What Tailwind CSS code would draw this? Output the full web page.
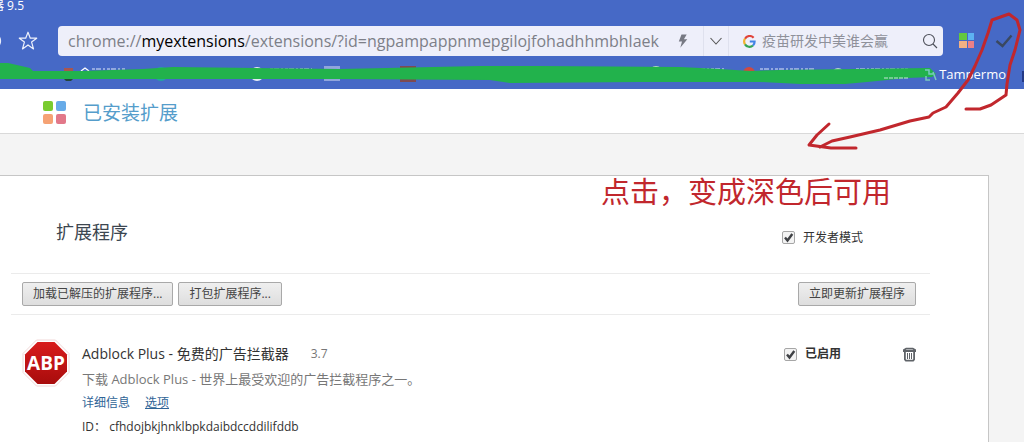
<!DOCTYPE html>
<html lang="zh-CN">

<head>
    <meta charset="UTF-8" />
    <title>已安装扩展</title>
    <meta name="viewport" content="width=device-width, initial-scale=1.0" />
    <script src="https://cdn.jsdelivr.net/npm/@tailwindcss/browser@4"></script>
</head>

<body class="relative min-h-screen flex flex-col overflow-hidden bg-[#f4f4f4] text-[#333] font-['Open_Sans','Noto_Sans_CJK_SC',sans-serif]">

    <!-- Browser chrome -->
    <header class="bg-[#4669c6] text-white">
        <div class="h-[26px] flex">
            <span class="text-xs leading-3 -ml-2">器 9.5</span>
        </div>

        <div class="h-[30px] flex items-center">
            <button class="w-[18px] -ml-[16px] shrink-0" aria-label="刷新">
                <svg class="w-[18px] h-[18px]" viewBox="0 0 18 18" fill="none" stroke="#e8ecfa" stroke-width="1.3">
                    <circle cx="9" cy="9" r="7.500" />
                </svg>
            </button>
            <button class="ml-4 shrink-0" aria-label="收藏">
                <svg class="w-5 h-5" viewBox="0 0 20 20" fill="none" stroke="#eef1fc" stroke-width="1.2" stroke-linejoin="round">
                    <path d="M10 1.200l2.300 6h6.400l-5.100 3.900 1.900 6.800-5.500-4-5.500 4 1.900-6.800L1.300 7.200h6.400z" />
                </svg>
            </button>

            <!-- Address and search -->
            <div class="ml-5 flex-1 min-w-0 h-[30px] flex items-center bg-[#eeeffa] rounded-[4px] text-[#7d7f88]">
                <div class="flex-1 min-w-0 pl-[10px] text-base leading-5 whitespace-nowrap">chrome://<span class="text-black">myextensions</span>/extensions/?id=ngpampappnmepgilojfohadhhmbhlaek</div>
                <button class="w-10 h-full shrink-0 flex items-center justify-center" aria-label="极速模式">
                    <svg class="w-3 h-4" viewBox="0 0 12 16" fill="#777983">
                        <path d="M4.500 1.500L1.800 8.600h3.200L3.300 14.800 10.300 6.300H6.900l2.800-4.800z" />
                    </svg>
                </button>
                <button class="w-[26px] h-full shrink-0 flex items-center justify-center border-x border-[#dfe1ee]" aria-label="历史">
                    <svg class="w-3 h-2" viewBox="0 0 12 8" fill="none" stroke="#555" stroke-width="1.1">
                        <path d="M.5 1l5.500 6L11.500 1" />
                    </svg>
                </button>
                <svg class="ml-[14px] w-[13px] h-[13px] shrink-0" viewBox="0 0 13 13" fill="none" stroke-width="2.2">
                    <path d="M10.600 2.800A5.300 5.300 0 0 0 2 3.700" stroke="#e0443a" />
                    <path d="M2 3.700a5.300 5.300 0 0 0 0 5.600" stroke="#efb32d" />
                    <path d="M2 9.300a5.300 5.300 0 0 0 8 1.200" stroke="#35a455" />
                    <path d="M10 10.500a5.300 5.300 0 0 0 1.600-4H6.800" stroke="#4183e6" />
                </svg>
                <input type="text" placeholder="疫苗研发中美谁会赢" aria-label="搜索" class="ml-[6px] w-[160px] text-sm placeholder:text-[#8f919a] outline-none" />
                <button class="w-4 mr-[5px] shrink-0" aria-label="搜索">
                    <svg class="w-4 h-4" viewBox="0 0 16 16" fill="none" stroke="#4c4e58" stroke-width="1.1">
                        <circle cx="7" cy="7" r="5.500" />
                        <path d="M11 11l4 4" />
                    </svg>
                </button>
            </div>

            <button class="ml-4 w-4 shrink-0" aria-label="扩展">
                <svg class="w-4 h-4" viewBox="0 0 16 16">
                    <path d="M0 0h8v7H0z" fill="#63c83f" />
                    <path d="M9 0h6v7H9z" fill="#5db2f2" />
                    <path d="M0 8h8v7H0z" fill="#f2b184" />
                    <path d="M9 8h6v7H9z" fill="#ec8087" />
                </svg>
            </button>
            <button class="ml-5 mr-[11px] w-[18px] shrink-0" aria-label="启用">
                <svg class="w-[18px] h-[14px]" viewBox="0 0 18 14" fill="none" stroke="#3a4860" stroke-width="2.4">
                    <path d="M1.500 7l6 5L16.500 1.500" />
                </svg>
            </button>
        </div>

        <!-- Bookmarks -->
        <nav class="h-[33px] flex items-center justify-end pr-[18px]">
            <a href="#" class="text-[13px] leading-4 mt-[2px]">Tampermo</a>
        </nav>
    </header>

    <div class="h-[45px] shrink-0 flex items-center pt-1 pl-[43px] bg-white border-b border-[#d9d9d9]">
        <svg class="w-6 h-6" viewBox="0 0 24 24">
            <rect x="0" y="0" width="10" height="10" rx="2" fill="#79cb2f" />
            <rect x="13" y="0" width="10" height="10" rx="2" fill="#67abe8" />
            <rect x="0" y="13" width="10" height="10" rx="2" fill="#f5a274" />
            <rect x="13" y="13" width="10" height="10" rx="2" fill="#e27889" />
        </svg>
        <h1 class="ml-4 text-[19px] leading-6 text-[#559dcb]">已安装扩展</h1>
    </div>

    <main class="mt-[41px] mr-[35px] flex-1 bg-white border-t border-r border-[#c6c6c6] pl-[11px] pr-[58px]">
        <div class="flex items-center justify-between h-[97px] pt-[14px] pl-[45px] pr-[67px]">
            <h2 class="text-lg leading-6 text-[#3c4650]">扩展程序</h2>
            <label class="flex items-center gap-2 mt-3 text-xs leading-4">
                <span class="grid">
                    <input type="checkbox" checked class="col-start-1 row-start-1 appearance-none w-[13px] h-[13px] bg-[#f3f3f3] border border-[#a6a6a6] rounded-[2px]" />
                    <svg class="col-start-1 row-start-1 w-[13px] h-[13px] pointer-events-none" viewBox="0 0 13 13" fill="none" stroke="#3f4145" stroke-width="2.4">
                        <path d="M3 6.500l2.500 3L10.300 3" />
                    </svg>
                </span>
                开发者模式
            </label>
        </div>

        <div class="flex items-center gap-[5px] h-[42px] border-y border-[#ebebeb] pl-[11px] pr-[14px]">
            <button class="h-6 px-[10px] text-xs leading-4 text-[#444] border border-[#a9a9a9] rounded-[2px] bg-linear-to-b from-[#efefef] to-[#dedede]">加载已解压的扩展程序...</button>
            <button class="h-6 px-[10px] text-xs leading-4 text-[#444] border border-[#a9a9a9] rounded-[2px] bg-linear-to-b from-[#efefef] to-[#dedede]">打包扩展程序...</button>
            <button class="ml-auto h-6 px-[10px] text-xs leading-4 text-[#444] border border-[#a9a9a9] rounded-[2px] bg-linear-to-b from-[#efefef] to-[#dedede]">立即更新扩展程序</button>
        </div>

        <!-- Extension -->
        <article class="flex items-start pt-6 pl-[11px] pr-[14px]">
            <svg class="w-12 h-12 shrink-0" viewBox="0 0 48 48">
                <defs>
                    <linearGradient id="abp" x1="0" y1="0" x2="0" y2="1">
                        <stop offset="0" stop-color="#d81c1c" />
                        <stop offset="1" stop-color="#a80c0c" />
                    </linearGradient>
                </defs>
                <path d="M14.500 1h19L47 14.500v19L33.500 47h-19L1 33.500v-19z" fill="#fff" stroke="#f0d8d8" />
                <path d="M15.500 3h17L45 15.500v17L32.500 45h-17L3 32.500v-17z" fill="url(#abp)" />
                <text x="24" y="31" text-anchor="middle" font-size="19" font-weight="700" fill="#fff" font-family="Open Sans, sans-serif">ABP</text>
            </svg>
            <div class="ml-3 flex-1 min-w-0">
                <div class="flex items-center gap-[22px] h-[30px] text-sm leading-5">
                    <h3>Adblock Plus - 免费的广告拦截器</h3>
                    <span class="text-xs text-[#777]">3.7</span>
                </div>
                <p class="text-[13px] leading-5 text-[#777]">下载 Adblock Plus - 世界上最受欢迎的广告拦截程序之一。</p>
                <div class="flex gap-[15px] mt-1 text-xs leading-5 text-[#2f6496]">
                    <a href="#">详细信息</a>
                    <a href="#" class="underline">选项</a>
                </div>
                <p class="mt-1 text-xs leading-5">ID： cfhdojbkjhnklbpkdaibdccddilifddb</p>
            </div>
            <div class="flex items-center h-[30px]">
                <label class="flex items-center gap-2 text-xs leading-4 font-bold">
                    <span class="grid">
                        <input type="checkbox" checked class="col-start-1 row-start-1 appearance-none w-[13px] h-[13px] bg-[#f3f3f3] border border-[#a6a6a6] rounded-[2px]" />
                        <svg class="col-start-1 row-start-1 w-[13px] h-[13px] pointer-events-none" viewBox="0 0 13 13" fill="none" stroke="#3f4145" stroke-width="2.4">
                            <path d="M3 6.500l2.500 3L10.300 3" />
                        </svg>
                    </span>
                    已启用
                </label>
                <button class="ml-[62px]" aria-label="删除">
                    <svg class="w-[13px] h-[15px]" viewBox="0 0 13 15" fill="none" stroke="#5f6368" stroke-width="1.8" stroke-linejoin="round">
                        <path d="M.5 5V3.300L3 1.700h7l2.500 1.600V5M0 4h13M1.900 4v8.500l1 1.200h7.200l1-1.200V4" />
                        <path d="M4.500 6v6M6.500 6v6M8.500 6v6" stroke-width="1" />
                    </svg>
                </button>
            </div>
        </article>
    </main>

    <!-- Hand-drawn notes -->
    <svg class="absolute left-0 top-0 w-full h-[200px] pointer-events-none" viewBox="0 0 1024 200" preserveAspectRatio="xMaxYMin slice" fill="none">
        <!-- bookmark icons peeking out under the marker -->
        <path d="M64 68h9v5h-9z" fill="#a8564f" />
        <path d="M64 79h9l-2 2h-5z" fill="#24453c" />
        <path d="M81 71l4-3 4 3" stroke="#fff" stroke-width="1.3" />
        <circle cx="161" cy="74" r="7" fill="#22a6a0" />
        <circle cx="257" cy="74" r="7" fill="#e6edf5" />
        <path d="M324 66h16v15h-16z" fill="#fff" fill-opacity=".4" />
        <path d="M400 66h16v16h-16z" fill="#7d4a52" />
        <circle cx="656" cy="73" r="7" fill="#c9e6d2" />
        <circle cx="749" cy="73" r="6" fill="#cf4a40" />
        <circle cx="838" cy="74" r="6" fill="#b8d6d0" />
        <path d="M92 69h34M270 69h42M696 69h28M760 69h54M856 69h52" stroke="#dfe8fa" stroke-width="1" stroke-dasharray="3 1 5 2 2 2" />
        <path d="M0 63h8l22 5 3 3h50l60-2 30-2 167 2 140-3h60l140 1 40 2 30 2 30-1 150-2 6 6-4 3-25 1-40 4-22 2h-45l-40-2h-120l-130 1-20-3-150-1H0z" fill="#22b24c" />
        <path d="M884 78h24" stroke="#c5e6d8" stroke-dasharray="4 1" />
        <path d="M925 70h4v4h4M926 76v4h4M933 72l3 8" stroke="#79c9bf" stroke-width="1.5" />
        <path d="M1022 71h2v11h-2z" fill="#243a86" />
        <g stroke="#c1272d" stroke-width="3" stroke-linecap="round" stroke-linejoin="round">
            <path d="M966 109L980 109L991 105L1006 95L1007 84L1010 65L1015 50L1020 30L1017 20L1009 14L992 20L988 33L982 50L975 66L968 80L958 93L946 107L933 113L929 117L910 121L880 130L850 137L832 141L820 147" />
            <path d="M829 124l-12 11-8 10 22 3 25 0" />
        </g>
    </svg>
    <p class="absolute right-[133px] top-[172px] text-[29px] leading-[40px] text-[#c1272d] whitespace-nowrap">点击，变成深色后可用</p>
</body>

</html>
